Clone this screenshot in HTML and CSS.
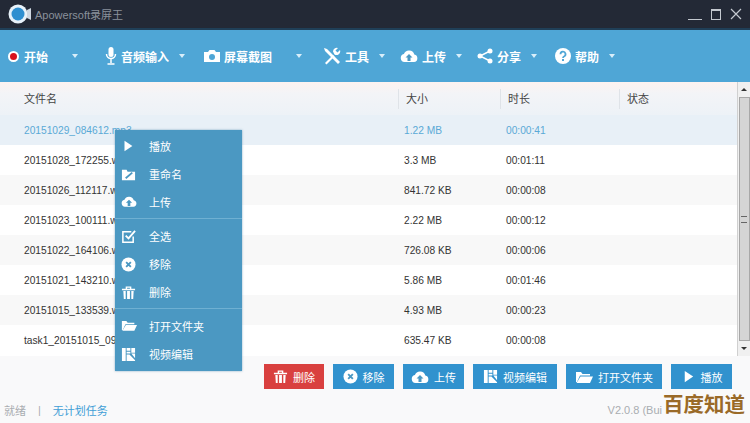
FILE: index.html
```html
<!DOCTYPE html>
<html lang="zh">

<head>
    <meta charset="UTF-8">
    <title>Apowersoft录屏王</title>
    <link rel="stylesheet" href="styles.css">
</head>

<body>
    <svg class="defs" width="0" height="0">
        <symbol id="i-play" viewBox="0 0 16 16"><path d="M4 2l9 6-9 6z" fill="currentColor"/></symbol>
        <symbol id="i-rename" viewBox="0 0 16 16"><path d="M1 3h5l1 2h8v9H1z" fill="currentColor"/><path d="M5 12l7-6" stroke="#4b98c2" stroke-width="2"/></symbol>
        <symbol id="i-cloud" viewBox="0 0 18 14"><path d="M4.5 13a4 4 0 0 1-.6-7.9A5.5 5.5 0 0 1 14.300 5.500 3.800 3.800 0 0 1 14 13z" fill="currentColor"/><path d="M9 5l3.500 3.500h-2V12h-3V8.500h-2z" fill="#4b98c2"/></symbol>
        <symbol id="i-check" viewBox="0 0 16 16"><path d="M13 8v6H2V3h9" fill="none" stroke="currentColor" stroke-width="1.600"/><path d="M5 7l3 3 7-8" fill="none" stroke="currentColor" stroke-width="2"/></symbol>
        <symbol id="i-remove" viewBox="0 0 16 16"><circle cx="8" cy="8" r="7.500" fill="currentColor"/><path d="M5.500 5.500l5 5m0-5l-5 5" stroke="#4b98c2" stroke-width="2"/></symbol>
        <symbol id="i-trash" viewBox="0 0 16 16"><path d="M1 4h14v1.500H1zM5 1.500h6V4H9.500V3h-3v1H5zM2.500 6.500h2.500V15H3zM6.500 6.500h3V15h-3zM11 6.500h2.500L13 15h-2z" fill="currentColor"/></symbol>
        <symbol id="i-folder" viewBox="0 0 18 14"><path d="M1 12V2h5l1.500 2H15v1.500H5L2 12z" fill="currentColor"/><path d="M5.500 6.500H18L15 13H1.500z" fill="currentColor"/></symbol>
        <symbol id="i-video" viewBox="0 0 16 16"><path d="M1 1h4v14H1zM6 1h4v3H6zM11 1h4v5h-4zM6 5h4v2H6zM6 8h3l6 6v1H6zM11 7h4v5z" fill="currentColor"/></symbol>
        <symbol id="i-mic" viewBox="0 0 12 18"><rect x="3.500" y="0" width="5" height="10" rx="2.500" fill="currentColor"/><path d="M1.500 7a4.500 4.500 0 0 0 9 0M6 12v4M2.500 17h7" fill="none" stroke="currentColor" stroke-width="1.500"/></symbol>
        <symbol id="i-camera" viewBox="0 0 16 14"><path d="M0 3h4l1.500-2h5L12 3h4v10H0z" fill="currentColor"/><circle cx="8" cy="8" r="3" fill="#4fa6d6"/></symbol>
        <symbol id="i-tools" viewBox="0 0 18 18"><path d="M1 1l3 1 11 11 2 2-2 2-2-2L2 4z" fill="currentColor"/><path d="M2 16l8-8 1.500 1.500-8 8zM10 4.500A3.800 3.800 0 0 1 15 1l-2.500 2.500 2 2L17 3a3.800 3.800 0 0 1-5.500 4.500z" fill="currentColor"/></symbol>
        <symbol id="i-share" viewBox="0 0 16 16"><circle cx="3" cy="8" r="2.500" fill="currentColor"/><circle cx="13" cy="3" r="2.500" fill="currentColor"/><circle cx="13" cy="13" r="2.500" fill="currentColor"/><path d="M13 3L3 8l10 5" fill="none" stroke="currentColor" stroke-width="1.400"/></symbol>
        <symbol id="i-help" viewBox="0 0 16 16"><circle cx="8" cy="8" r="8" fill="currentColor"/><path d="M5.500 6.200a2.500 2.500 0 1 1 3.500 2.300c-.7.300-1 .7-1 1.500" fill="none" stroke="#4fa6d6" stroke-width="1.800"/><rect x="7" y="11" width="2" height="2" fill="#4fa6d6"/></symbol>
    </svg>

    <div class="app">
        <div class="titlebar">
            <svg class="logo" width="24" height="22" viewBox="0 0 24 22">
                <circle cx="10" cy="11" r="9.500" fill="#e8f2fa"/>
                <circle cx="10" cy="11" r="6.500" fill="#2f8fd0"/>
                <path d="M19 7l4-2v12l-4-2z" fill="#cfd8e2"/>
            </svg>
            <span class="app-name">Apowersoft录屏王</span>
            <div class="win-btns">
                <span class="win-min"></span>
                <span class="win-max"></span>
                <svg width="12" height="12" viewBox="0 0 12 12"><path d="M1 1l10 10M11 1L1 11" stroke="#c3c8cf" stroke-width="1.200"/></svg>
            </div>
        </div>

        <div class="toolbar">
            <div class="tool tool-start"><span class="rec"></span>开始<span class="caret"></span></div>
            <div class="tool tool-audio"><svg width="12" height="18"><use href="#i-mic"/></svg>音频输入<span class="caret caret-near"></span></div>
            <div class="tool tool-shot"><svg width="16" height="14"><use href="#i-camera"/></svg>屏幕截图<span class="caret"></span></div>
            <div class="tool tool-tools"><svg width="18" height="18"><use href="#i-tools"/></svg>工具<span class="caret caret-near"></span></div>
            <div class="tool tool-upload"><svg width="18" height="14"><use href="#i-cloud"/></svg>上传<span class="caret caret-near"></span></div>
            <div class="tool tool-share"><svg width="16" height="16"><use href="#i-share"/></svg>分享<span class="caret caret-near"></span></div>
            <div class="tool tool-help"><svg width="16" height="16"><use href="#i-help"/></svg>帮助<span class="caret caret-near"></span></div>
        </div>

        <div class="content">
            <div class="list">
                <div class="row row-head">
                    <span>文件名</span><span>大小</span><span>时长</span><span>状态</span>
                </div>
                <div class="row row-sel"><span>20151029_084612.mp3</span><span>1.22 MB</span><span>00:00:41</span><span></span></div>
                <div class="row"><span>20151028_172255.wmv</span><span>3.3 MB</span><span>00:01:11</span><span></span></div>
                <div class="row row-alt"><span>20151026_112117.wmv</span><span>841.72 KB</span><span>00:00:08</span><span></span></div>
                <div class="row"><span>20151023_100111.wmv</span><span>2.22 MB</span><span>00:00:12</span><span></span></div>
                <div class="row row-alt"><span>20151022_164106.wmv</span><span>726.08 KB</span><span>00:00:06</span><span></span></div>
                <div class="row"><span>20151021_143210.wmv</span><span>5.86 MB</span><span>00:01:46</span><span></span></div>
                <div class="row row-alt"><span>20151015_133539.wmv</span><span>4.93 MB</span><span>00:00:23</span><span></span></div>
                <div class="row"><span>task1_20151015_093000.wmv</span><span>635.47 KB</span><span>00:00:08</span><span></span></div>
            </div>
            <div class="scrollbar">
                <span class="arrow-up"></span>
                <div class="thumb"><span class="grip"></span></div>
                <span class="arrow-down"></span>
            </div>
        </div>

        <div class="actions">
            <div class="btn btn-red w60"><svg width="15" height="15"><use href="#i-trash"/></svg>删除</div>
            <div class="btn w61"><svg width="15" height="15"><use href="#i-remove"/></svg>移除</div>
            <div class="btn w61"><svg width="18" height="14"><use href="#i-cloud"/></svg>上传</div>
            <div class="btn w84"><svg width="15" height="15"><use href="#i-video"/></svg>视频编辑</div>
            <div class="btn w96"><svg width="18" height="14"><use href="#i-folder"/></svg>打开文件夹</div>
            <div class="btn w61"><svg width="15" height="15"><use href="#i-play"/></svg>播放</div>
        </div>

        <div class="statusbar">
            <span class="ready">就绪</span>
            <span class="sep">|</span>
            <span class="task">无计划任务</span>
            <span class="version">V2.0.8 (Bui</span>
        </div>
    </div>

    <!-- 右键菜单 -->
    <div class="menu">
        <div class="menu-item"><svg width="14" height="14"><use href="#i-play"/></svg>播放</div>
        <div class="menu-item"><svg width="15" height="15"><use href="#i-rename"/></svg>重命名</div>
        <div class="menu-item"><svg width="16" height="13"><use href="#i-cloud"/></svg>上传</div>
        <div class="menu-line"></div>
        <div class="menu-item"><svg width="15" height="15"><use href="#i-check"/></svg>全选</div>
        <div class="menu-item"><svg width="15" height="15"><use href="#i-remove"/></svg>移除</div>
        <div class="menu-item"><svg width="15" height="15"><use href="#i-trash"/></svg>删除</div>
        <div class="menu-line"></div>
        <div class="menu-item"><svg width="16" height="13"><use href="#i-folder"/></svg>打开文件夹</div>
        <div class="menu-item"><svg width="15" height="15"><use href="#i-video"/></svg>视频编辑</div>
    </div>

    <div class="watermark">百度知道</div>
</body>

</html>
```

FILE: styles.css
```css
body {
    margin: 0;
    padding: 0;
    font-family: "Liberation Sans", "Noto Sans CJK SC", sans-serif;
    font-size: 11px;
    overflow: hidden;
}

.defs {
    position: absolute;
}

.app {
    width: 750px;
    height: 423px;
    display: flex;
    flex-direction: column;
    background-color: #f9f9fa;
}

.titlebar {
    height: 30px;
    flex: none;
    display: flex;
    align-items: center;
    padding: 0 8px 0 8px;
    box-sizing: border-box;
    background-color: #232936;
    border-bottom: 2px solid #1f3f58;
}

.app-name {
    margin-left: 3px;
    color: #8a919b;
    font-size: 11px;
}

.win-btns {
    margin-left: auto;
    display: flex;
    align-items: center;
    gap: 9px;
}

.win-min {
    width: 14px;
    height: 1px;
    margin-top: 10px;
    background-color: #c3c8cf;
}

.win-max {
    width: 8px;
    height: 8px;
    border: 1px solid #c3c8cf;
    border-top-width: 2px;
}

.toolbar {
    height: 52px;
    flex: none;
    display: flex;
    align-items: center;
    padding-left: 8px;
    box-sizing: border-box;
    background-color: #4fa6d6;
    color: #fff;
    font-size: 12px;
    font-weight: bold;
}

.tool {
    display: flex;
    align-items: center;
    gap: 4px;
    height: 52px;
    white-space: nowrap;
}

.tool-start { width: 97px; }
.tool-audio { width: 99px; }
.tool-shot { width: 119px; }
.tool-tools { width: 77px; }
.tool-upload { width: 77px; }
.tool-share { width: 78px; }
.tool-help { width: 70px; }

.rec {
    width: 7px;
    height: 7px;
    margin-right: 1px;
    border-radius: 50%;
    background-color: #d8101c;
    border: 2px solid #fff;
}

.caret {
    width: 0;
    height: 0;
    margin-left: 20px;
    border: 3px solid transparent;
    border-top: 4px solid #d8eefa;
    border-bottom: 0;
}

.caret-near {
    margin-left: 6px;
}

.content {
    flex: none;
    height: 274px;
    display: flex;
    overflow: hidden;
    background-color: #fff;
}

.list {
    flex: 1;
    min-width: 0;
}

.row {
    display: grid;
    grid-template-columns: 398px 102px 119px 1fr;
    height: 30px;
    align-items: center;
    color: #333;
    font-size: 10.200px;
    background-color: #fff;
}

.row span {
    padding-left: 6px;
    white-space: nowrap;
    overflow: hidden;
}

.row span:first-child {
    padding-left: 24px;
}

.row-head {
    height: 33px;
    font-size: 11px;
    color: #444;
    background: linear-gradient(#fdf3f0, #f3f4f7 35%, #edf2f7);
}

.row-head span {
    height: 20px;
    line-height: 20px;
    padding-left: 7px;
    border-left: 1px solid #dfe3e8;
}

.row-head span:first-child {
    border-left: 0;
}

.row-sel {
    background-color: #e8f0f7;
    color: #5aa9d6;
}

.row-alt {
    background-color: #f8f8f8;
}

.scrollbar {
    width: 12px;
    flex: none;
    display: flex;
    flex-direction: column;
    align-items: center;
    background-color: #f0f0f0;
    border-left: 1px solid #d0d0d0;
}

.arrow-up,
.arrow-down {
    width: 0;
    height: 0;
    margin: 6px 0;
    border: 3px solid transparent;
}

.arrow-up {
    border-bottom: 3px solid #333;
    border-top: 0;
}

.arrow-down {
    border-top: 3px solid #333;
    border-bottom: 0;
}

.thumb {
    flex: 1;
    width: 11px;
    display: flex;
    align-items: center;
    justify-content: center;
    background-color: #d5d5d5;
    border: 1px solid #a8a8a8;
    box-sizing: border-box;
}

.grip {
    width: 6px;
    height: 5px;
    border-top: 1px solid #666;
    border-bottom: 1px solid #666;
}

.actions {
    flex: none;
    height: 33px;
    display: flex;
    justify-content: flex-end;
    align-items: flex-end;
    gap: 9px;
    padding-right: 18px;
    box-sizing: border-box;
}

.btn {
    height: 25px;
    display: flex;
    align-items: center;
    justify-content: center;
    gap: 5px;
    background-color: #3192ce;
    color: #fff;
    font-size: 11px;
}

.btn-red {
    background-color: #d9403f;
}

.w60 { width: 60px; }
.w61 { width: 61px; }
.w84 { width: 84px; }
.w96 { width: 96px; }

.statusbar {
    flex: 1;
    display: flex;
    align-items: center;
    gap: 12px;
    padding: 8px 88px 0 4px;
    box-sizing: border-box;
    color: #a9adb1;
    font-size: 11px;
}

.task {
    color: #3f9ed6;
}

.version {
    margin-left: auto;
    white-space: nowrap;
}

.menu {
    position: absolute;
    left: 115px;
    top: 130px;
    width: 127px;
    height: 241px;
    padding-top: 2px;
    box-sizing: border-box;
    background-color: #4b98c2;
    color: #fff;
    font-size: 11px;
    box-shadow: 0 0 2px rgba(60, 120, 160, .6);
}

.menu-item {
    height: 28px;
    display: flex;
    align-items: center;
    padding-left: 34px;
    position: relative;
}

.menu-item svg {
    position: absolute;
    left: 6px;
    top: 7px;
}

.menu-line {
    height: 1px;
    margin: 2px 0 3px;
    background-color: #6fb0d2;
}

.watermark {
    position: absolute;
    left: 663px;
    top: 393px;
    color: #9a6a28;
    font-size: 20.500px;
    font-weight: bold;
    line-height: 24px;
    white-space: nowrap;
}
```
